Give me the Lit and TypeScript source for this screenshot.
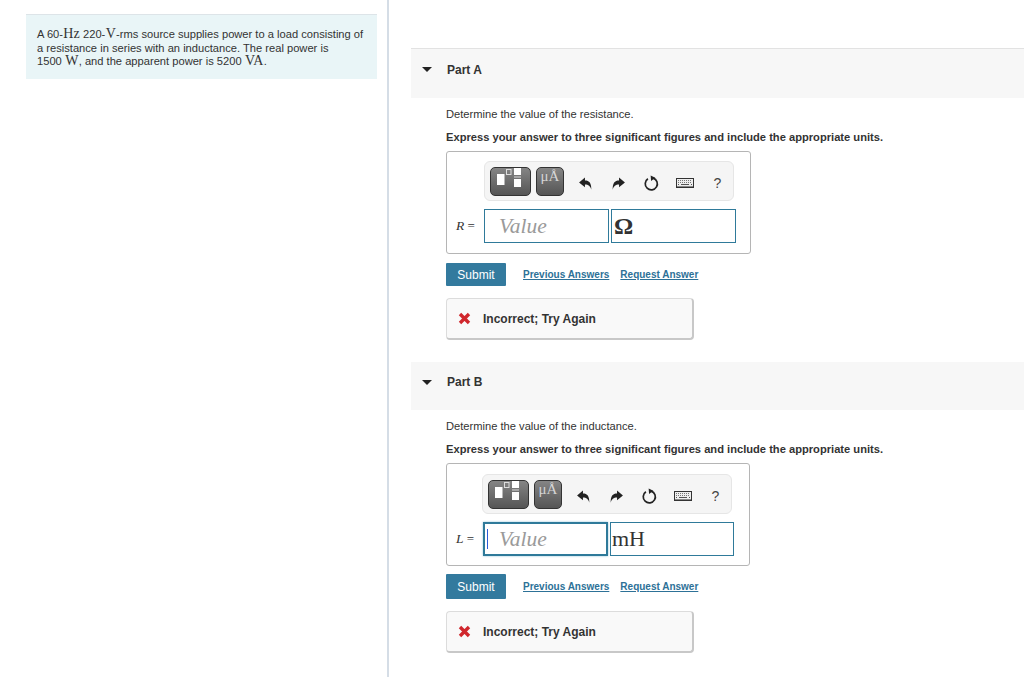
import { html, LitElement, css } from "lit";
import { customElement } from "lit/decorators.js";

const undoIcon = html`<svg width="15" height="15" viewBox="0 0 14 14"><path d="M1 6 L6.5 1.5 V4.2 C10.5 4.2 12.6 6.6 12.4 12.8 C11.4 9.4 9.8 8 6.5 8 V10.6 Z" fill="#222"/></svg>`;
const redoIcon = html`<svg width="15" height="15" viewBox="0 0 14 14"><path d="M13 6 L7.5 1.5 V4.2 C3.5 4.2 1.4 6.6 1.6 12.8 C2.6 9.4 4.2 8 7.5 8 V10.6 Z" fill="#222"/></svg>`;
const resetIcon = html`<svg width="17" height="17" viewBox="0 0 16 16"><path d="M9.6 2.9 A5.7 5.7 0 1 1 4.6 3.6" fill="none" stroke="#222" stroke-width="1.6"/><path d="M7.2 0.4 L11.6 2.6 L7.6 5.6 Z" fill="#222"/></svg>`;
const keyboardIcon = html`<svg width="18" height="10" viewBox="0 0 18 10"><rect x="0.5" y="0.5" width="17" height="9" fill="#eee" stroke="#333"/><path d="M2 2.5 H16 M2 4.5 H16" stroke="#777" stroke-width="1" stroke-dasharray="1 1"/><path d="M2 6.5 H3 M5 6.5 H13 M15 6.5 H16" stroke="#555" stroke-width="1"/><path d="M1 8.5 H17" stroke="#888"/></svg>`;
const templateIcon = html`<svg class="tpl-glyph" width="24" height="19" viewBox="0 0 24 19"><rect x="0" y="6" width="7.5" height="11" fill="#fff"/><rect x="9.5" y="1.5" width="4.5" height="5" fill="none" stroke="#ddd"/><rect x="17" y="0" width="7" height="7" fill="#fff"/><rect x="17" y="8.5" width="7" height="1" fill="#ddd"/><rect x="17" y="11" width="7" height="8" fill="#fff"/></svg>`;
const crossIcon = html`<svg width="13" height="13" viewBox="0 0 13 13"><path d="M2 2 L11 11 M11 2 L2 11" stroke="#d0272d" stroke-width="3.4"/></svg>`;

@customElement("app-root")
export class AppRoot extends LitElement {
  static styles = css`
    :host {
      display: flex;
      width: 1024px;
      height: 677px;
      overflow: hidden;
      background: #fff;
      color: #333;
      font-family: "Liberation Sans", Arial, sans-serif;
      font-size: 11.15px;
    }
    .left {
      width: 389px;
      height: 100%;
      flex: none;
      box-sizing: border-box;
      padding: 14px 10px 0 26px;
      border-right: 2px solid #d5dde6;
    }
    .intro {
      border-top: 1px solid #dde4e8;
      background: #e9f5f7;
      padding: 13px 10px 11px 11px;
      line-height: 13.5px;
      height: 40px;
    }
    .m {
      font-family: "Liberation Serif", serif;
      font-size: 14px;
      line-height: 0;
      margin: 0 0.3px;
    }
    .right {
      flex: 1;
      margin-left: 22px;
      padding-top: 48px;
    }
    .part + .part {
      margin-top: 22px;
    }
    .head {
      display: flex;
      align-items: center;
      background: #f7f7f7;
      border-top: 1px solid #e2e2e2;
      font-size: 12px;
      font-weight: bold;
      color: #333;
      padding-left: 11px;
      box-sizing: border-box;
      height: 50px;
      padding-bottom: 8px;
    }
    .part + .part .head {
      border-top: none;
      height: 48px;
      padding-bottom: 8px;
    }
    .arrow {
      width: 0;
      height: 0;
      border-left: 5px solid transparent;
      border-right: 5px solid transparent;
      border-top: 5px solid #222;
      margin-right: 15px;
    }
    .body {
      padding-left: 35px;
    }
    .prompt {
      margin: 10px 0 0;
      line-height: 13px;
    }
    .instr {
      margin: 9px 0 0;
      line-height: 14px;
      font-weight: bold;
    }
    .box {
      margin-top: 7px;
      width: 305px;
      height: 103px;
      box-sizing: border-box;
      border: 1px solid #b5b5b5;
      border-radius: 3px;
      padding: 9px 0 0 37px;
    }
    .b .box {
      width: 304px;
      padding: 10px 0 0 35px;
    }
    .toolbar {
      display: flex;
      align-items: center;
      width: 250px;
      height: 40px;
      box-sizing: border-box;
      border: 1px solid #e6e6e6;
      border-radius: 6px;
      background: #f5f5f5;
      padding-left: 5px;
    }
    .tool {
      display: flex;
      flex: none;
      align-items: center;
      justify-content: center;
      box-sizing: border-box;
      height: 29px;
      border-radius: 5px;
      border: 1px solid #333;
      background: linear-gradient(#858585, #6a6a6a 55%, #555);
    }
    .tpl {
      width: 41px;
    }
    .tpl-glyph {
      margin: 0 3px 7px 0;
    }
    .mu {
      width: 28px;
      margin-left: 5px;
      font-family: "Liberation Serif", serif;
      font-size: 15px;
      color: #d5d5d5;
      align-items: flex-start;
    }
    .ico {
      display: flex;
      align-items: center;
      justify-content: center;
      flex: none;
      width: 33px;
      padding-top: 4px;
      color: #444;
      font-size: 14px;
    }
    .ico.first {
      margin-left: 5px;
    }
    .row {
      display: flex;
      align-items: center;
      margin: 8px 0 0 -28px;
    }
    .b .row {
      margin: 8px 0 0 -26px;
    }
    .var {
      width: 28px;
      box-sizing: border-box;
      font-family: "Liberation Serif", serif;
      font-size: 13px;
      white-space: nowrap;
    }
    .b .var {
      width: 27px;
    }
    .var i {
      font-size: 13.5px;
    }
    .field {
      box-sizing: border-box;
      width: 125px;
      height: 34px;
      border: 1px solid #2f7a9a;
      font-family: "Liberation Serif", serif;
      display: flex;
      align-items: center;
    }
    .value {
      font-style: italic;
      font-size: 21.5px;
      color: #9a9a9a;
      padding-left: 14px;
    }
    .unit {
      margin-left: 2px;
      font-size: 22px;
      color: #333;
      padding-left: 1px;
    }
    .unit b {
      font-size: 24px;
      margin-left: 1px;
    }
    .b .unit {
      width: 124px;
    }
    .focus {
      position: relative;
      border: 2px solid #2f7a9a;
      box-shadow: 0 0 2px #8fc4d8;
    }
    .caret {
      position: absolute;
      left: 2px;
      top: 5px;
      width: 1px;
      height: 20px;
      background: #2a5bd7;
    }
    .actions {
      display: flex;
      align-items: center;
      margin-top: 9px;
    }
    .b .actions {
      margin-top: 8px;
    }
    .submit {
      width: 60px;
      height: 23px;
      box-sizing: border-box;
      border-radius: 1px;
      background: #337a9e;
      color: #fff;
      font-size: 12px;
      display: flex;
      align-items: center;
      justify-content: center;
      margin-right: 17px;
    }
    .b .submit {
      height: 25px;
    }
    .link {
      color: #2d7197;
      font-size: 10px;
      font-weight: bold;
      text-decoration: underline;
      margin-right: 11px;
    }
    .feedback {
      display: flex;
      align-items: center;
      margin-top: 12px;
      width: 248px;
      height: 42px;
      box-sizing: border-box;
      border: 1px solid #dcdcdc;
      border-bottom: 2px solid #c8c8c8;
      border-right: 2px solid #c8c8c8;
      border-radius: 4px;
      background: #f9f9f9;
      padding-left: 11px;
      font-size: 12px;
      font-weight: bold;
      color: #333;
    }
    .feedback svg {
      margin-right: 12px;
    }
  `;

  part(
    name: string,
    cls: string,
    prompt: string,
    variable: string,
    unit: unknown,
    focused: boolean,
  ) {
    return html`
      <section class="part ${cls}">
        <div class="head"><span class="arrow"></span>${name}</div>
        <div class="body">
          <p class="prompt">${prompt}</p>
          <p class="instr">
            Express your answer to three significant figures and include the appropriate units.
          </p>
          <div class="box">
            <div class="toolbar">
              <div class="tool tpl">${templateIcon}</div>
              <div class="tool mu">μÅ</div>
              <span class="ico first">${undoIcon}</span>
              <span class="ico">${redoIcon}</span>
              <span class="ico">${resetIcon}</span>
              <span class="ico">${keyboardIcon}</span>
              <span class="ico">?</span>
            </div>
            <div class="row">
              <span class="var"><i>${variable}</i> =</span>
              <div class="field value ${focused ? "focus" : ""}">
                ${focused ? html`<span class="caret"></span>` : ""}Value
              </div>
              <div class="field unit">${unit}</div>
            </div>
          </div>
          <div class="actions">
            <span class="submit">Submit</span>
            <a class="link">Previous Answers</a>
            <a class="link">Request Answer</a>
          </div>
          <div class="feedback">${crossIcon}Incorrect; Try Again</div>
        </div>
      </section>
    `;
  }

  render() {
    return html`
      <div class="left">
        <div class="intro">
          A 60-<span class="m">Hz</span> 220-<span class="m">V</span>-rms source supplies power to a load consisting of
          a resistance in series with an inductance. The real power is<br />
          1500 <span class="m">W</span>, and the apparent power is 5200 <span class="m">VA</span>.
        </div>
      </div>
      <div class="right">
        ${this.part("Part A", "a", "Determine the value of the resistance.", "R", html`<b>Ω</b>`, false)}
        ${this.part("Part B", "b", "Determine the value of the inductance.", "L", "mH", true)}
      </div>
    `;
  }
}
